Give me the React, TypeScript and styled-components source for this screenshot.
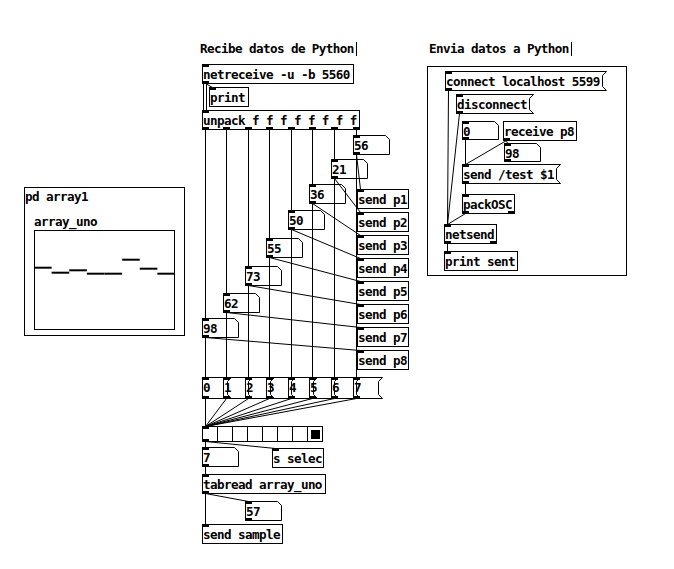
import React from 'react';
import styled, { createGlobalStyle } from 'styled-components';

const GlobalStyle = createGlobalStyle`
  html, body { margin: 0; padding: 0; background: #fff; }
`;

type Kind = 'obj' | 'msg' | 'num';
interface PdNode {
  id: string;
  kind: Kind;
  x: number;
  y: number;
  w: number;
  h?: number;
  text: string;
  ins?: number[];
  outs?: number[];
}

const Canvas = styled.div`
  position: relative;
  width: 674px;
  height: 569px;
  overflow: hidden;
  background: #fff;
  color: #000;
  font-family: "DejaVu Sans Mono", "Liberation Mono", monospace;
  font-weight: bold;
  font-size: 12.6px;
  letter-spacing: -0.59px;
`;

const Wires = styled.svg`
  position: absolute;
  left: 0;
  top: 0;
  width: 674px;
  height: 569px;
  pointer-events: none;
`;

const Box = styled.div<{ $x: number; $y: number; $w: number; $h: number; $framed: boolean }>`
  position: absolute;
  left: ${p => p.$x}px;
  top: ${p => p.$y}px;
  width: ${p => p.$w}px;
  height: ${p => p.$h}px;
  box-shadow: ${p => (p.$framed ? 'inset 0 0 0 1px #000' : 'none')};
`;

const Outline = styled.svg`
  position: absolute;
  left: 0;
  top: 0;
  overflow: visible;
`;

const Label = styled.span`
  position: absolute;
  left: 1px;
  top: 2px;
  line-height: 18px;
  white-space: pre;
`;

const Port = styled.span<{ $left: number; $side: 'in' | 'out' }>`
  position: absolute;
  left: ${p => p.$left}px;
  ${p => (p.$side === 'in' ? 'top: 0;' : 'bottom: 0;')}
  width: 7px;
  height: 3px;
  background: #000;
`;

const Comment = styled.div<{ $x: number; $y: number; $w: number }>`
  position: absolute;
  left: ${p => p.$x}px;
  top: ${p => p.$y}px;
  width: ${p => p.$w}px;
  height: 20px;
`;

const CommentBar = styled.span`
  position: absolute;
  right: 0;
  top: 4px;
  width: 1px;
  height: 14px;
  background: #000;
`;

const Frame = styled.div<{ $x: number; $y: number; $w: number; $h: number }>`
  position: absolute;
  left: ${p => p.$x}px;
  top: ${p => p.$y}px;
  width: ${p => p.$w}px;
  height: ${p => p.$h}px;
  box-shadow: inset 0 0 0 1px #000;
`;

const FrameTitle = styled.span`
  position: absolute;
  left: 1px;
  top: 1px;
  line-height: 18px;
  white-space: pre;
`;

const GraphLabel = styled.span`
  position: absolute;
  left: 10px;
  top: 26px;
  line-height: 18px;
  white-space: pre;
`;

const Graph = styled.div`
  position: absolute;
  left: 10px;
  top: 43px;
  width: 141px;
  height: 100px;
  box-shadow: inset 0 0 0 1px #000;
`;

const Plot = styled.svg`
  position: absolute;
  left: 0;
  top: 0;
  width: 141px;
  height: 100px;
`;

const Radio = styled.div`
  position: absolute;
  left: 202px;
  top: 426px;
  display: flex;
  border: 1px solid #000;
  border-right: none;
`;

const RadioCell = styled.div<{ $on: boolean }>`
  width: 14px;
  height: 14px;
  border-right: 1px solid #000;
  display: flex;
  align-items: center;
  justify-content: center;
  &::after {
    content: '';
    display: ${p => (p.$on ? 'block' : 'none')};
    width: 9px;
    height: 9px;
    background: #000;
  }
`;

const RadioPort = styled.span<{ $side: 'in' | 'out' }>`
  position: absolute;
  left: -1px;
  ${p => (p.$side === 'in' ? 'top: -1px;' : 'bottom: -1px;')}
  width: 7px;
  height: 3px;
  background: #000;
`;

// ---- data ----
const colOff = [0, 1, 2, 3, 4, 5, 6, 7].map(i => Math.floor((151 * i) / 7));
const numVals = ['98', '62', '73', '55', '50', '36', '21', '56'];
const numY = [318, 293, 266, 238, 210, 184, 159, 135];

const nodes: PdNode[] = [
  { id: 'netreceive', kind: 'obj', x: 202, y: 64, w: 152, text: 'netreceive -u -b 5560' },
  { id: 'print', kind: 'obj', x: 209, y: 87, w: 40, text: 'print', outs: [] },
  { id: 'unpack', kind: 'obj', x: 202, y: 110, w: 158, text: 'unpack f f f f f f f f', outs: colOff },
  ...numVals.map((v, i) => ({ id: `num${i}`, kind: 'num' as Kind, x: 202 + colOff[i], y: numY[i], w: 37, text: v })),
  ...[1, 2, 3, 4, 5, 6, 7, 8].map(k => ({
    id: `send${k}`,
    kind: 'obj' as Kind,
    x: 357,
    y: 189 + 23 * (k - 1),
    w: 52,
    text: `send p${k}`,
    outs: [] as number[],
  })),
  ...[0, 1, 2, 3, 4, 5, 6, 7].map(i => ({
    id: `msg${i}`,
    kind: 'msg' as Kind,
    x: 202 + colOff[i],
    y: 377,
    w: 26,
    h: 22,
    text: String(i),
  })),
  { id: 'n7', kind: 'num', x: 202, y: 447, w: 37, text: '7' },
  { id: 'sselec', kind: 'obj', x: 272, y: 448, w: 52, text: 's selec', outs: [] },
  { id: 'tabread', kind: 'obj', x: 202, y: 474, w: 124, text: 'tabread array_uno' },
  { id: 'n57', kind: 'num', x: 245, y: 501, w: 37, text: '57' },
  { id: 'sendsample', kind: 'obj', x: 202, y: 524, w: 81, text: 'send sample', outs: [] },

  { id: 'connect', kind: 'msg', x: 445, y: 71, w: 158, text: 'connect localhost 5599' },
  { id: 'disconnect', kind: 'msg', x: 456, y: 94, w: 74, text: 'disconnect' },
  { id: 'n0', kind: 'num', x: 462, y: 121, w: 37, h: 19, text: '0' },
  { id: 'recv', kind: 'obj', x: 503, y: 121, w: 74, text: 'receive p8', ins: [] },
  { id: 'n98r', kind: 'num', x: 504, y: 143, w: 37, h: 19, text: '98' },
  { id: 'sendtest', kind: 'msg', x: 462, y: 164, w: 95, text: 'send /test $1' },
  { id: 'packosc', kind: 'obj', x: 462, y: 194, w: 53, text: 'packOSC', outs: [0, 46] },
  { id: 'netsend', kind: 'obj', x: 444, y: 224, w: 53, text: 'netsend', outs: [0, 46] },
  { id: 'printsent', kind: 'obj', x: 444, y: 251, w: 74, text: 'print sent', outs: [] },
];

const byId: Record<string, PdNode> = Object.fromEntries(nodes.map(n => [n.id, n]));

type Pt = [number, number];
const outPt = (id: string, k = 0): Pt => {
  const n = byId[id];
  const offs = n.outs ?? [0];
  return [n.x + offs[k] + 3.5, n.y + (n.h ?? 20) - 0.5];
};
const inPt = (id: string): Pt => {
  const n = byId[id];
  return [n.x + 3.5, n.y + 0.5];
};

const RADIO_IN: Pt = [205.5, 426.5];
const RADIO_OUT: Pt = [205.5, 441.5];

const wires: [Pt, Pt][] = [
  [[203.5, 84], [203.5, 110]],
  [[206.5, 84], [206.5, 110]],
  [outPt('netreceive'), inPt('print')],
  ...[0, 1, 2, 3, 4, 5, 6, 7].map(i => [outPt('unpack', i), inPt(`num${i}`)] as [Pt, Pt]),
  ...[0, 1, 2, 3, 4, 5, 6, 7].map(i => [outPt(`num${i}`), inPt(`send${8 - i}`)] as [Pt, Pt]),
  ...[0, 1, 2, 3, 4, 5, 6, 7].map(i => [outPt(`num${i}`), inPt(`msg${i}`)] as [Pt, Pt]),
  ...[0, 1, 2, 3, 4, 5, 6, 7].map(i => [outPt(`msg${i}`), RADIO_IN] as [Pt, Pt]),
  [RADIO_OUT, inPt('n7')],
  [RADIO_OUT, [275.5, 448.5]],
  [outPt('n7'), inPt('tabread')],
  [outPt('tabread'), inPt('n57')],
  [outPt('tabread'), inPt('sendsample')],
  [outPt('connect'), inPt('netsend')],
  [outPt('disconnect'), inPt('netsend')],
  [outPt('n0'), inPt('sendtest')],
  [outPt('recv'), inPt('n98r')],
  [outPt('recv'), inPt('sendtest')],
  [outPt('sendtest'), inPt('packosc')],
  [outPt('packosc'), inPt('netsend')],
  [outPt('netsend'), inPt('printsent')],
];

const arrayY = [37.7, 42.7, 40.3, 43.7, 43.7, 29.7, 38.7, 43.7];

function PdBox({ n }: { n: PdNode }) {
  const h = n.h ?? 20;
  const ins = n.ins ?? [0];
  const outs = n.outs ?? [0];
  const w = n.w;
  let shape: React.ReactNode = null;
  if (n.kind === 'msg') {
    const pts = `0.5,0.5 ${w + 3.5},0.5 ${w - 0.5},4.5 ${w - 0.5},${h - 4.5} ${w + 3.5},${h - 0.5} 0.5,${h - 0.5}`;
    shape = (
      <Outline width={w + 4} height={h}>
        <polygon points={pts} fill="none" stroke="#000" strokeWidth={1} />
      </Outline>
    );
  } else if (n.kind === 'num') {
    const pts = `0.5,0.5 ${w - 4.5},0.5 ${w - 0.5},4.5 ${w - 0.5},${h - 0.5} 0.5,${h - 0.5}`;
    shape = (
      <Outline width={w} height={h}>
        <polygon points={pts} fill="none" stroke="#000" strokeWidth={1} />
      </Outline>
    );
  }
  return (
    <Box $x={n.x} $y={n.y} $w={w} $h={h} $framed={n.kind === 'obj'}>
      {shape}
      <Label>{n.text}</Label>
      {ins.map((o, i) => (
        <Port key={`i${i}`} $left={o} $side="in" />
      ))}
      {outs.map((o, i) => (
        <Port key={`o${i}`} $left={o} $side="out" />
      ))}
    </Box>
  );
}

export default function App() {
  return (
    <>
      <GlobalStyle />
      <Canvas>
        <Wires>
          {wires.map(([a, b], i) => (
            <line key={i} x1={a[0]} y1={a[1]} x2={b[0]} y2={b[1]} stroke="#000" strokeWidth={1} />
          ))}
        </Wires>

        <Comment $x={199} $y={38} $w={158}>
          <Label>Recibe datos de Python</Label>
          <CommentBar />
        </Comment>
        <Comment $x={428} $y={38} $w={144}>
          <Label>Envia datos a Python</Label>
          <CommentBar />
        </Comment>

        <Frame $x={24} $y={187} $w={161} $h={149}>
          <FrameTitle>pd array1</FrameTitle>
          <GraphLabel>array_uno</GraphLabel>
          <Graph>
            <Plot viewBox="0 0 141 100">
              {arrayY.map((y, i) => (
                <line
                  key={i}
                  x1={(141 / 8) * i}
                  x2={(141 / 8) * (i + 1)}
                  y1={y}
                  y2={y}
                  stroke="#000"
                  strokeWidth={2}
                />
              ))}
            </Plot>
          </Graph>
        </Frame>

        <Frame $x={427} $y={66} $w={200} $h={210} />

        {nodes.map(n => (
          <PdBox key={n.id} n={n} />
        ))}

        <Radio>
          {[0, 1, 2, 3, 4, 5, 6, 7].map(i => (
            <RadioCell key={i} $on={i === 7} />
          ))}
          <RadioPort $side="in" />
          <RadioPort $side="out" />
        </Radio>
      </Canvas>
    </>
  );
}
